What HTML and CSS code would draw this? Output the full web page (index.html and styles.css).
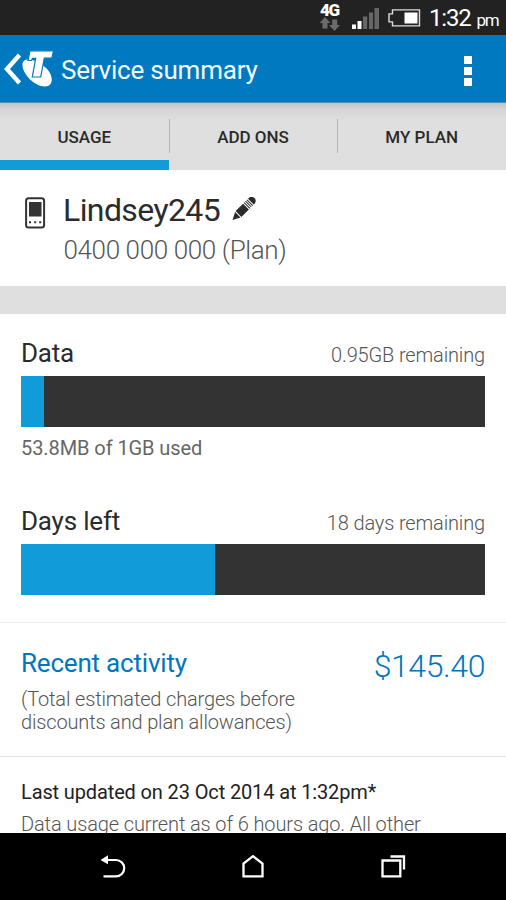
FILE: index.html
```html
<!DOCTYPE html>
<html lang="en">
<head>
<meta charset="utf-8">
<title>Service summary</title>
<link rel="stylesheet" href="styles.css">
</head>
<body>
<div class="screen">
  <div class="status">
    <div class="network">
      <span class="network-type">4G</span>
      <svg width="22" height="14" viewBox="0 0 22 14" fill="#6b6b6b"><path d="M6 0 11.500 6H8.500V11.500H3.500V6H.5zM15.500 14 10 8h3.200V2.500h5V8H21z"/></svg>
    </div>
    <svg class="signal" width="28" height="22" viewBox="0 0 28 22"><g fill="#fff"><path d="M0 16.500h4V21H0zM5.500 13h4v8h-4z"/></g><path fill="#666" d="M11 8.500h4.200V21H11zM17 4.500h4V21h-4zM22.500 0H27v21h-4.500z"/></svg>
    <svg class="battery" width="33" height="18" viewBox="0 0 33 18"><path fill="none" stroke="#ddd" stroke-width="1.400" d="M4.500.9h27v16h-27v-4H1v-8h3.500z"/><path fill="#fff" d="M16.500 3.500h13v11h-13z"/></svg>
    <div class="time">1:32<span class="ampm">pm</span></div>
  </div>
  <header class="appbar">
    <svg class="back" width="18" height="32" viewBox="0 0 18 32"><path fill="none" stroke="#fff" stroke-width="4.400" d="M15.500 2 3 16 15.500 30"/></svg>
    <svg class="logo" width="32" height="38" viewBox="0 0 32 38"><path fill="#fff" d="M6 9.500C2 9.500 0 12 .5 16 1.500 25 13 36.500 23 36.500c6 0 8-5 6-11C27 18 15 9.500 6 9.500z"/><path fill="#fff" stroke="#0079c1" stroke-width="1.200" d="M8 .8h23.500l-1.600 7.200h-7.600L18.700 27H10.300L13.700 8.300h-3.200L9.500 10.500H6z"/></svg>
    <h1 class="title">Service summary</h1>
    <div class="menu"><i></i><i></i><i></i></div>
  </header>
  <nav class="tabs">
    <a class="tab active">USAGE</a>
    <a class="tab">ADD ONS</a>
    <a class="tab">MY PLAN</a>
  </nav>
  <section class="profile">
    <svg class="phone" width="22" height="32" viewBox="0 0 22 32"><rect x="2.100" y="1.200" width="18" height="29.300" rx="2.500" fill="#fff" stroke="#333" stroke-width="2"/><path fill="#333" d="M5 5h12.500v14.500H5zM5 24.200h2v2H5zM10.200 24.200h2v2h-2zM15.200 24.200h2v2h-2z"/></svg>
    <div>
      <div class="name-row"><span class="name">Lindsey245</span>
        <svg class="pencil" width="24" height="24" viewBox="0 0 24 24"><g transform="translate(.5 23) rotate(-45)" fill="#2b2b2b"><path d="M0 0 7.500-3.800V3.800zM8.500-4.100H19V4.100H8.500zM20-4.100h1V4.100h-1zM22-4.100h1V4.100h-1zM24-4.100h1V4.100h-1zM26-4.100h1.500q3.500.8 3.500 4.100t-3.500 4.100h-1.500z"/></g></svg>
      </div>
      <div class="number">0400 000 000 (Plan)</div>
    </div>
  </section>
  <div class="band"></div>
  <section class="meter data">
    <div class="meter-head"><h2>Data</h2><span class="remain">0.95GB remaining</span></div>
    <div class="bar"><div class="fill" style="width:4.95%"></div></div>
    <div class="used">53.8MB of 1GB used</div>
  </section>
  <section class="meter days">
    <div class="meter-head"><h2>Days left</h2><span class="remain">18 days remaining</span></div>
    <div class="bar"><div class="fill" style="width:41.9%"></div></div>
  </section>
  <section class="activity">
    <div><h2>Recent activity</h2>
    <p>(Total estimated charges before<br>discounts and plan allowances)</p></div>
    <div class="amount">$145.40</div>
  </section>
  <section class="updated">
    <div class="last">Last updated on 23 Oct 2014 at 1:32pm*</div>
    <div class="note">Data usage current as of 6 hours ago. All other</div>
  </section>
  <footer class="navbar">
    <svg width="26" height="24" viewBox="0 0 26 24"><path fill="none" stroke="#fff" stroke-width="2.200" d="M7 5h9a8.200 8.200 0 0 1 0 16.400H3.500"/><path fill="#fff" d="M.5 5 8 .3v9z"/></svg>
    <svg width="24" height="24" viewBox="0 0 24 24"><path fill="none" stroke="#fff" stroke-width="2.300" d="M2.500 21.300V8.600L12 1.200l9.500 7.400v12.700z"/></svg>
    <svg width="26" height="24" viewBox="0 0 26 24"><path fill="none" stroke="#fff" stroke-width="2.300" d="M2.500 5.500h17.800v15.800H2.500zM10.500 1.500H24V14.500"/></svg>
  </footer>
</div>
</body>
</html>
```
FILE: styles.css
```css
* { box-sizing: border-box; }
body { margin: 0; font-family: Roboto, "Liberation Sans", sans-serif; background: #fff; }
h1, h2, p { margin: 0; font-weight: 400; }
svg { display: block; flex: none; }
.screen { width: 506px; height: 900px; overflow: hidden; display: flex; flex-direction: column; white-space: nowrap; }
.screen > * { flex: none; }
.status { height: 35px; background: #222; color: #fff; display: flex; padding-left: 319px; }
.network { width: 33px; padding-top: 3px; }
.network-type { display: block; font-size: 17px; line-height: 14px; height: 14px; font-weight: 900; padding-left: 1px; letter-spacing: -1.300px; }
.signal { margin-top: 8px; }
.battery { margin: 9px 0 0 8px; }
.time { margin-left: 8px; font-size: 24px; line-height: 37px; display: flex; align-items: baseline; letter-spacing: -1.200px; }
.ampm { font-size: 17px; margin-left: 6px; letter-spacing: -1.200px; }
.appbar { height: 68px; background: #0079c1; display: flex; color: #fff; border-bottom: 1px solid #4f8fbd; }
.back { margin: 18px 0 0 4px; }
.logo { margin: 15px 0 0 0; }
.title { margin-left: 7px; font-size: 26px; line-height: 70px; letter-spacing: -.22px; color: #f4f9fd; }
.menu { margin: 21px 34px 0 auto; display: flex; flex-direction: column; gap: 3px; }
.menu i { width: 8px; height: 8px; background: #fff; }
.tabs { height: 67px; display: flex; background: linear-gradient(#c3c3c3, #d6d6d6 7px, #dfdfdf 18px); }
.tab { flex: 1; text-align: center; font-size: 17px; font-weight: 500; line-height: 69px; color: #2a2a2a; position: relative; }
.tab + .tab::before { content: ""; position: absolute; left: 0; top: 16px; width: 1px; height: 34px; background: #b5b5b5; }
.active { border-bottom: 10px solid #119bd9; }
.profile { height: 116px; display: flex; padding-left: 24px; }
.phone { margin: 27px 18px 0 0; }
.name-row { display: flex; height: 60px; }
.name { font-size: 32px; line-height: 80px; color: #2b2b2b; letter-spacing: -.6px; margin-left: -1px; }
.pencil { margin: 27px 0 0 12px; }
.number { font-size: 26px; font-weight: 300; line-height: 40px; color: #555; letter-spacing: -.38px; margin-left: -.5px; }
.band { height: 28px; background: #dfdfdf; }
.meter { padding: 0 21px; }
.data { height: 194px; padding-top: 26px; }
.days { height: 115px; border-bottom: 1px solid #eee; }
.meter-head { display: flex; justify-content: space-between; align-items: baseline; height: 36px; line-height: 26px; }
h2 { font-size: 26px; color: #2b2b2b; letter-spacing: -.2px; }
.remain { font-size: 20px; font-weight: 300; color: #555; letter-spacing: -.15px; }
.bar { height: 50.500px; background: #333; }
.fill { height: 100%; background: #119bd9; }
.used { font-size: 20px; line-height: 43px; color: #666; letter-spacing: -.08px; }
.activity { height: 134px; display: flex; justify-content: space-between; padding: 26px 21px 0; border-bottom: 1px solid #e2e2e2; }
.activity h2 { line-height: 28px; color: #0075c2; }
.activity p { font-size: 20px; line-height: 23px; padding-top: 11px; font-weight: 300; color: #555; letter-spacing: -.16px; }
.amount { font-size: 32px; font-weight: 300; line-height: 34px; color: #0075c2; letter-spacing: -.4px; }
.updated { height: 76px; padding: 20px 21px 0; overflow: hidden; font-size: 20px; }
.last { line-height: 30px; color: #222; letter-spacing: -.13px; }
.note { font-weight: 300; line-height: 34px; color: #555; letter-spacing: -.12px; }
.navbar { height: 67px; background: #000; display: flex; justify-content: space-between; padding: 22px 100px 0 100px; }
```
